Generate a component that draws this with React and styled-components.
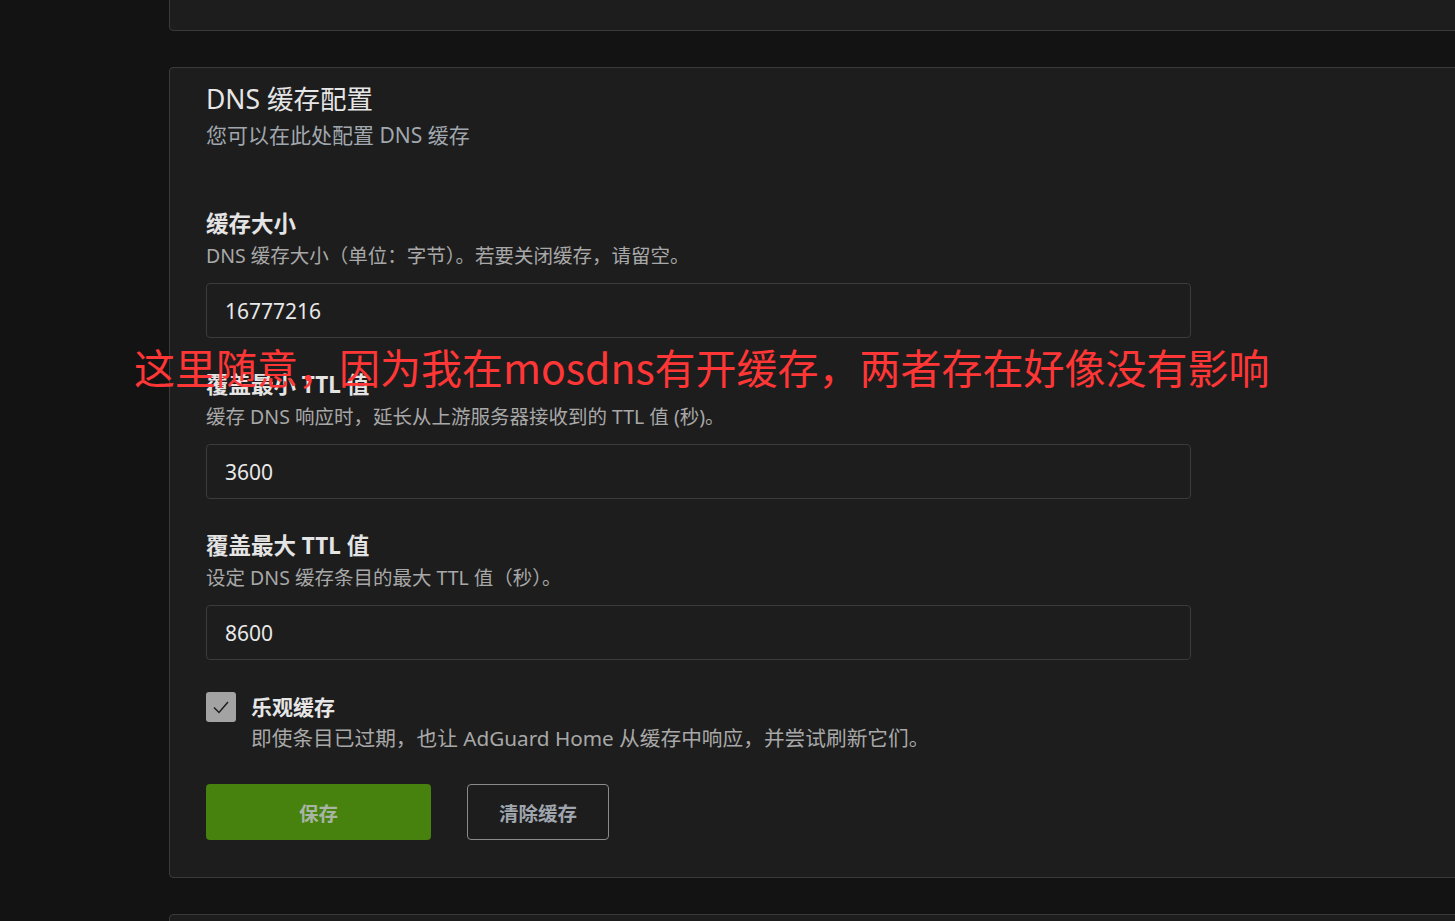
import React, { useState } from "react";
import styled, { createGlobalStyle } from "styled-components";

const GlobalStyle = createGlobalStyle`
  html, body {
    margin: 0;
    padding: 0;
    background: #131313;
    overflow: hidden;
  }
  body {
    font-family: "Noto Sans", "Noto Sans CJK SC", sans-serif;
  }
`;

const fields = [
  {
    label: "缓存大小",
    desc: "DNS 缓存大小（单位：字节）。若要关闭缓存，请留空。",
    value: "16777216",
  },
  {
    label: "覆盖最小 TTL 值",
    desc: "缓存 DNS 响应时，延长从上游服务器接收到的 TTL 值 (秒)。",
    value: "3600",
  },
  {
    label: "覆盖最大 TTL 值",
    desc: "设定 DNS 缓存条目的最大 TTL 值（秒）。",
    value: "8600",
  },
];

const App = () => {
  const [optimistic, setOptimistic] = useState(true);

  return (
    <>
      <GlobalStyle />
      <Page>
        <Card peek="top" />
        <Card>
          <Title>DNS 缓存配置</Title>
          <Subtitle>您可以在此处配置 DNS 缓存</Subtitle>
          <Form>
            {fields.map((f) => (
              <Field key={f.label}>
                <Label>{f.label}</Label>
                <Desc>{f.desc}</Desc>
                <Input defaultValue={f.value} />
              </Field>
            ))}
            <CheckRow onClick={() => setOptimistic(!optimistic)}>
              <Box checked={optimistic}>
                {optimistic && (
                  <svg width="22" height="22" viewBox="0 0 22 22">
                    <path
                      d="M4 11.5 L9 16.5 L18 6"
                      fill="none"
                      stroke="#1d1d1d"
                      strokeWidth="1.5"
                    />
                  </svg>
                )}
              </Box>
              <div>
                <CheckLabel>乐观缓存</CheckLabel>
                <CheckDesc>
                  即使条目已过期，也让 AdGuard Home 从缓存中响应，并尝试刷新它们。
                </CheckDesc>
              </div>
            </CheckRow>
            <Buttons>
              <Button variant="primary">保存</Button>
              <Button>清除缓存</Button>
            </Buttons>
          </Form>
        </Card>
        <Card peek="bottom" />
        <Note>这里随意，因为我在mosdns有开缓存，两者存在好像没有影响</Note>
      </Page>
    </>
  );
};

const Page = styled.div`
  position: relative;
  height: 921px;
  overflow: hidden;
  padding-left: 169px;
  display: flex;
  flex-direction: column;
  gap: 36px;
`;

const Card = styled.section`
  width: 1320px;
  box-sizing: border-box;
  background: #1d1d1d;
  border: 1px solid #3a3a3a;
  border-radius: 4px;
  padding: 16px 36px 37px;
  flex-shrink: 0;
  ${(p) => p.peek === "top" && `margin-top: -40px; height: 71px;`}
  ${(p) => p.peek === "bottom" && `height: 60px;`}
`;

const Title = styled.h2`
  margin: 0;
  font-size: 26.5px;
  line-height: 31px;
  font-weight: 400;
  color: #e6e6e6;
`;

const Subtitle = styled.p`
  margin: 7px 0 0;
  font-size: 21px;
  line-height: 26px;
  color: #a0a7ae;
`;

const Form = styled.div`
  margin-top: 61px;
  display: flex;
  flex-direction: column;
  width: 985px;
`;

const Field = styled.div`
  display: flex;
  flex-direction: column;
  margin-bottom: 32px;
`;

const Label = styled.div`
  font-size: 22.5px;
  line-height: 30px;
  font-weight: 700;
  color: #e4e4e4;
`;

const Desc = styled.div`
  margin-top: 4px;
  font-size: 19.5px;
  line-height: 26px;
  color: #a8a8a8;
`;

const Input = styled.input`
  margin-top: 14px;
  height: 55px;
  box-sizing: border-box;
  background: #1d1d1d;
  border: 1px solid #3b3b3b;
  border-radius: 4px;
  padding: 0 18px;
  font-family: "Noto Sans", "Noto Sans CJK SC", sans-serif;
  font-size: 21px;
  color: #e8e8e8;
  outline: none;
`;

const CheckRow = styled.label`
  display: flex;
  gap: 15px;
  cursor: pointer;
`;

const Box = styled.span`
  width: 30px;
  height: 30px;
  flex-shrink: 0;
  border-radius: 3px;
  background: ${(p) => (p.checked ? "#a3a3a3" : "transparent")};
  border: ${(p) => (p.checked ? "none" : "1px solid #777")};
  display: flex;
  align-items: center;
  justify-content: center;
`;

const CheckLabel = styled.div`
  font-size: 21px;
  line-height: 30px;
  font-weight: 700;
  color: #e6e6e6;
`;

const CheckDesc = styled.div`
  margin-top: 2px;
  font-size: 20.7px;
  line-height: 28px;
  color: #a8a8a8;
`;

const Buttons = styled.div`
  display: flex;
  gap: 36px;
  margin-top: 32px;
`;

const Button = styled.button`
  height: 56px;
  box-sizing: border-box;
  border-radius: 4px;
  font-family: "Noto Sans", "Noto Sans CJK SC", sans-serif;
  font-size: 19.5px;
  font-weight: 700;
  cursor: pointer;
  ${(p) =>
    p.variant === "primary"
      ? `width: 225px; background: #46820d; border: none; color: #a9b5a4;`
      : `width: 142px; background: transparent; border: 1px solid #8a8a8a; color: #a0a6ad;`}
`;

const Note = styled.div`
  position: absolute;
  left: 134px;
  top: 336px;
  font-family: "Noto Sans CJK SC", sans-serif;
  font-size: 41px;
  line-height: 60px;
  color: #ff3636;
  white-space: nowrap;
  pointer-events: none;
`;

export default App;
